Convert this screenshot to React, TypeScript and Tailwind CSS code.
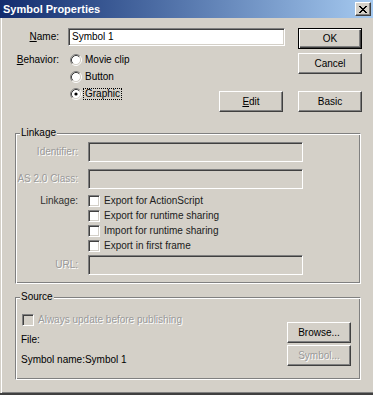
import React from "react";
import clsx from "clsx";

const sunken =
  "border border-t-[#808080] border-l-[#808080] border-b-white border-r-white shadow-[inset_1px_1px_0_#404040,inset_-1px_-1px_0_#d4d0c8]";
const dim = "text-[#9a9a9a] [text-shadow:1px_1px_0_#fff]";

function Btn({
  children,
  def,
  disabled,
  className,
}: {
  children: React.ReactNode;
  def?: boolean;
  disabled?: boolean;
  className?: string;
}) {
  return (
    <div
      className={clsx(
        "flex h-[21px] w-[64px] items-center justify-center border",
        def
          ? "border-black shadow-[inset_1px_1px_0_#fff,inset_-1px_-1px_0_#404040,inset_-2px_-2px_0_#808080]"
          : "border-t-white border-l-white border-r-[#404040] border-b-[#404040] shadow-[inset_-1px_-1px_0_#808080]",
        disabled && dim,
        className
      )}
    >
      {children}
    </div>
  );
}

function Radio({ checked }: { checked?: boolean }) {
  return (
    <svg width="12" height="12" viewBox="0 0 12 12" className="shrink-0">
      <circle cx="6" cy="6" r="4.5" fill="#fff" />
      <path d="M2.11 9.89 A5.5 5.5 0 0 1 9.89 2.11" stroke="#808080" fill="none" />
      <path d="M9.89 2.11 A5.5 5.5 0 0 1 2.11 9.89" stroke="#fff" fill="none" />
      <path d="M2.82 9.18 A4.5 4.5 0 0 1 9.18 2.82" stroke="#404040" fill="none" />
      <path d="M9.18 2.82 A4.5 4.5 0 0 1 2.82 9.18" stroke="#d4d0c8" fill="none" />
      {checked && <circle cx="6" cy="6" r="1.6" fill="#000" />}
    </svg>
  );
}

function Check({ disabled }: { disabled?: boolean }) {
  return (
    <div
      className={clsx(
        "h-[12px] w-[12px] shrink-0",
        sunken,
        disabled ? "bg-[#d4d0c8]" : "bg-white"
      )}
    />
  );
}

function Group({
  title,
  className,
  children,
}: {
  title: string;
  className?: string;
  children: React.ReactNode;
}) {
  return (
    <div
      className={clsx(
        "relative ml-[15px] w-[346px] shrink-0 border border-t-[#808080] border-l-[#808080] border-r-white border-b-white shadow-[inset_1px_1px_0_#fff,inset_-1px_-1px_0_#808080]",
        className
      )}
    >
      <span className="absolute -top-[7px] left-[4px] bg-[#d4d0c8] px-[1px] leading-[12px]">
        {title}
      </span>
      {children}
    </div>
  );
}

const LINK_OPTS = [
  "Export for ActionScript",
  "Export for runtime sharing",
  "Import for runtime sharing",
  "Export in first frame",
];

export default function App() {
  return (
    <div className="flex h-[395px] w-[373px] flex-col overflow-hidden bg-[#d4d0c8] font-['Liberation_Sans',Arial,sans-serif] text-[10px] leading-[12px] text-black">
      {/* title bar */}
      <div className="flex h-[18px] shrink-0 items-center bg-linear-to-r from-[#142c6e] to-[#a6caf0]">
        <span className="ml-[3px] text-[11px] font-bold text-white">Symbol Properties</span>
        <div className="ml-auto mr-[2px] flex h-[14px] w-[16px] items-center justify-center border border-t-white border-l-white border-r-[#404040] border-b-[#404040] bg-[#d4d0c8] shadow-[inset_-1px_-1px_0_#808080]">
          <svg width="8" height="7" viewBox="0 0 8 7" shapeRendering="crispEdges">
            <path
              d="M0 0h2v1h-2zM6 0h2v1h-2zM1 1h2v1h-2zM5 1h2v1h-2zM2 2h4v1h-4zM3 3h2v1h-2zM2 4h4v1h-4zM1 5h2v1h-2zM5 5h2v1h-2zM0 6h2v1h-2zM6 6h2v1h-2z"
              fill="#000"
            />
          </svg>
        </div>
      </div>

      {/* body */}
      <div className="flex h-[377px] shrink-0 flex-col border-b-2 border-b-[#404040] shadow-[inset_1px_0_0_#d4d0c8,inset_2px_0_0_#fff,inset_0_-1px_0_#808080]">
        <div className="flex shrink-0 pt-[10px]">
          <div className="flex w-[285px] flex-col">
            <div className="flex h-[18px] items-center">
              <span className="w-[59px] text-right">
                <span className="underline">N</span>ame:
              </span>
              <div className={clsx("ml-[9px] flex h-[18px] w-[217px] items-center bg-white pl-[3px]", sunken)}>
                Symbol 1
              </div>
            </div>
            <div className="mt-[5px] flex items-start">
              <span className="flex h-[17px] w-[59px] items-center justify-end">
                <span>
                  <span className="underline">B</span>ehavior:
                </span>
              </span>
              <div className="ml-[11px] flex flex-col">
                <div className="flex h-[17px] items-center">
                  <Radio />
                  <span className="ml-[3px]">Movie clip</span>
                </div>
                <div className="flex h-[17px] items-center">
                  <Radio />
                  <span className="ml-[3px]">Button</span>
                </div>
                <div className="flex h-[17px] items-center">
                  <Radio checked />
                  <span className="ml-[1px] border border-dotted border-black px-[1px] leading-[10px]">
                    Graphic
                  </span>
                </div>
              </div>
              <Btn className="ml-auto mr-[2px] mt-[40px]">
                <span>
                  <span className="underline">E</span>dit
                </span>
              </Btn>
            </div>
          </div>
          <div className="ml-[13px] flex flex-col">
            <Btn def>OK</Btn>
            <Btn className="mt-[4px]">Cancel</Btn>
            <Btn className="mt-[17px]">Basic</Btn>
          </div>
        </div>

        <Group title="Linkage" className="mt-[21px] h-[151px]">
          <div className="flex flex-col pt-[8px]">
            {["Identifier:", "AS 2.0 Class:"].map((l, i) => (
              <div key={l} className={clsx("flex h-[20px] items-center", i > 0 && "mt-[7px]")}>
                <span className={clsx("w-[62px] text-right", dim)}>{l}</span>
                <div className={clsx("ml-[10px] h-[20px] w-[215px]", sunken)} />
              </div>
            ))}
            <div className="mt-[4px] flex">
              <span className="flex h-[15px] w-[62px] items-center justify-end text-[#303030]">Linkage:</span>
              <div className="ml-[10px] flex flex-col">
                {LINK_OPTS.map((o) => (
                  <div key={o} className="flex h-[15px] items-center">
                    <Check />
                    <span className="ml-[4px] text-[#202020]">{o}</span>
                  </div>
                ))}
              </div>
            </div>
            <div className="mt-[2px] flex h-[20px] items-center">
              <span className={clsx("w-[62px] text-right", dim)}>URL:</span>
              <div className={clsx("ml-[10px] h-[20px] w-[215px]", sunken)} />
            </div>
          </div>
        </Group>

        <Group title="Source" className="mt-[13px] h-[83px]">
          <div className="flex items-start justify-between">
            <div className="flex flex-col pl-[5px] pt-[14px]">
              <div className="ml-[1px] flex h-[15px] items-center">
                <Check disabled />
                <span className={clsx("ml-[4px]", dim)}>Always update before publishing</span>
              </div>
              <div className="mt-[5px] flex h-[15px] items-center">File:</div>
              <div className="mt-[5px] flex h-[15px] items-center">Symbol name:Symbol 1</div>
            </div>
            <div className="mr-[9px] flex flex-col pt-[24px]">
              <Btn>Browse...</Btn>
              <Btn disabled className="mt-[2px]">
                Symbol...
              </Btn>
            </div>
          </div>
        </Group>
      </div>
    </div>
  );
}
